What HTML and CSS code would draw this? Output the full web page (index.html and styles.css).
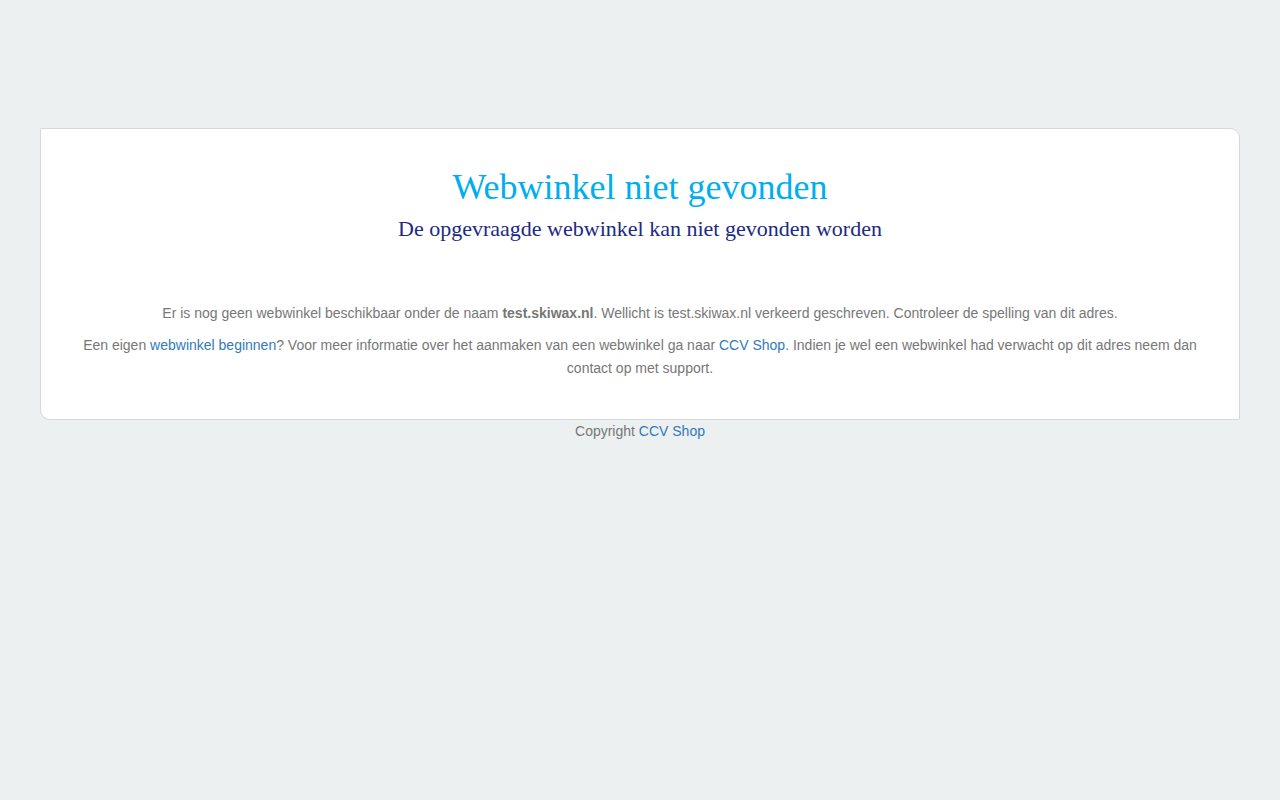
FILE: index.html
```html
<!DOCTYPE html>
<html lang="nl">
<head>
<meta charset="utf-8">
<title>Webwinkel niet gevonden</title>
<link rel="stylesheet" href="styles.css">
</head>
<body>
<div class="page">
  <div class="card">
    <div class="header">
      <h1 class="title">Webwinkel niet gevonden</h1>
      <h2 class="subtitle">De opgevraagde webwinkel kan niet gevonden worden</h2>
    </div>
    <div class="content">
      <p>Er is nog geen webwinkel beschikbaar onder de naam <strong>test.skiwax.nl</strong>. Wellicht is test.skiwax.nl verkeerd geschreven. Controleer de spelling van dit adres.</p>
      <p>Een eigen <a href="#">webwinkel beginnen</a>? Voor meer informatie over het aanmaken van een webwinkel ga naar <a href="#">CCV Shop</a>. Indien je wel een webwinkel had verwacht op dit adres neem dan contact op met support.</p>
    </div>
  </div>
  <div class="footer">Copyright <a href="#">CCV Shop</a></div>
</div>
</body>
</html>
```
FILE: styles.css
```css
html, body {
  margin: 0;
  padding: 0;
}
body {
  background: #ecf0f1;
  font-family: "Liberation Sans", Arial, sans-serif;
  font-size: 14px;
  color: #777777;
}
.page {
  padding-top: 128px;
}
.card {
  margin: 0 40px;
  background: #ffffff;
  border: 1px solid #d6d8d9;
  border-radius: 2px 10px 2px 10px;
  padding: 39px 40px 30px;
}
.header {
  text-align: center;
}
.title {
  margin: 0;
  font-family: "Liberation Serif", "Times New Roman", serif;
  font-weight: normal;
  font-size: 36px;
  line-height: 1.1;
  color: #00aeef;
}
.subtitle {
  margin: 9px 0 0;
  font-family: "Liberation Serif", "Times New Roman", serif;
  font-weight: normal;
  font-size: 22px;
  line-height: 1.1;
  color: #1c2a85;
}
.content {
  margin-top: 61px;
  text-align: center;
  line-height: 1.6;
}
.content p {
  margin: 0 0 10px;
}
.content strong {
  font-weight: bold;
}
a {
  color: #337ab7;
  text-decoration: none;
}
.footer {
  text-align: center;
  line-height: 20px;
  margin-top: 1px;
}
```
